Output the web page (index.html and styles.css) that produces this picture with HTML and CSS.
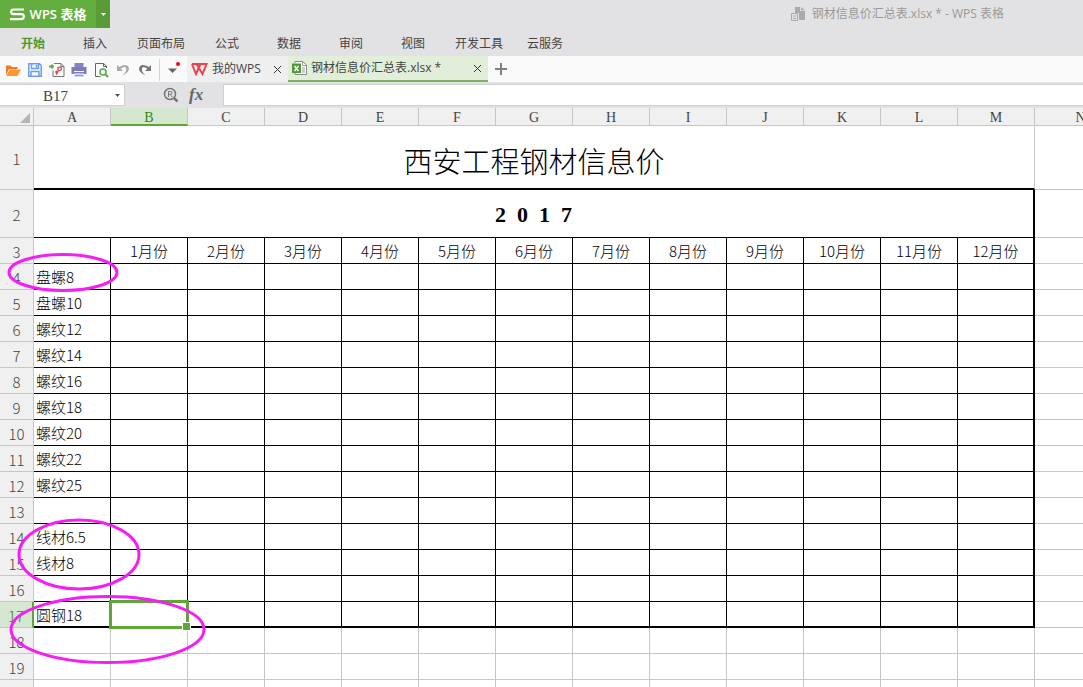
FILE: index.html
```html
<!DOCTYPE html>
<html lang="zh-CN">
<head>
<meta charset="utf-8">
<title>钢材信息价汇总表.xlsx - WPS 表格</title>
<link rel="stylesheet" href="styles.css">
</head>
<body>
<header class="titlebar">
  <div class="brand">
    <button class="brand-main" type="button">
      <svg width="15" height="13" viewBox="0 0 15 13" fill="none" stroke="#fff" stroke-width="2.2"><path d="M14 1.500H3.500Q1.200 1.500 1.200 3.700T3.500 6.200H11.500Q13.800 6.200 13.800 8.600T11.500 11.200H0"/></svg>
      WPS 表格
    </button>
    <button class="brand-drop" type="button" aria-label="菜单"><svg width="5" height="3" viewBox="0 0 5 3"><path d="M0 0H5L2.5 3Z" fill="#fff"/></svg></button>
  </div>
  <div class="doc-title">
    <svg width="15" height="15" viewBox="0 0 15 15"><path d="M4 0H9V4H14V13H8V6H4Z M10 0L14 3.200H10Z" fill="#aaa"/><path d="M.5 6.500H6.500V13.500H.5ZM2 9H5M2 11.500H5" fill="none" stroke="#aaa"/></svg>
    <span>钢材信息价汇总表.xlsx * - WPS 表格</span>
  </div>
</header>

<nav class="menu">
  <button class="menu-item current" type="button">开始</button>
  <button class="menu-item" type="button">插入</button>
  <button class="menu-item" type="button">页面布局</button>
  <button class="menu-item" type="button">公式</button>
  <button class="menu-item" type="button">数据</button>
  <button class="menu-item" type="button">审阅</button>
  <button class="menu-item" type="button">视图</button>
  <button class="menu-item" type="button">开发工具</button>
  <button class="menu-item" type="button">云服务</button>
</nav>

<div class="tabbar">
  <div class="quick">
    <button type="button" aria-label="打开"><svg width="16" height="16" viewBox="0 0 16 16"><path d="M1 13V3.500H5.500L7 5H12.500V7H4Z" fill="#f47b1c"/><path d="M4.500 7.500H16L12.500 14H1.200Z" fill="#ff9433"/></svg></button>
    <button type="button" aria-label="保存"><svg width="16" height="16" viewBox="0 0 16 16" fill="none" stroke="#6c9de8" stroke-width="1.500"><path d="M1.750 1.750H12.500L14.250 3.500V14.250H1.750ZM4.500 2V6.500H11.500V2M4 14V9.500H12V14M9.500 3V5.500"/></svg></button>
    <button type="button" aria-label="输出为PDF"><svg width="16" height="16" viewBox="0 0 16 16" fill="none"><path d="M5 1.500H12L15 4.500V14.500H4V8.500M12 1.500V4.500H15" stroke="#777"/><path d="M7 12.500Q9.500 10.500 9 5.500Q12.500 4.500 12.500 7Q12.500 8.500 7 9.500V11" stroke="#d9424d" stroke-width="1.300"/><path d="M0 4.500H5M3 2.500V6.500" stroke="#63aa43" stroke-width="2"/></svg></button>
    <button type="button" aria-label="打印"><svg width="16" height="16" viewBox="0 0 16 16"><path d="M3.500 1H12.500V5H3.500Z" fill="#8583c3"/><path d="M.5 5H15.500V12H.5Z" fill="#7d7bbd"/><path d="M3 9.500H13M3 12H13V15H3Z" fill="#a09ed3" stroke="#fff"/></svg></button>
    <button type="button" aria-label="打印预览"><svg width="16" height="16" viewBox="0 0 16 16" fill="none"><path d="M13.500 6V4L10.500 1.500H2.500V14.500H7.500M10.500 1.500V4.500H13" stroke="#666"/><circle cx="10" cy="10" r="3" stroke="#58a54b" stroke-width="1.500"/><path d="M12 12L15 15" stroke="#58a54b" stroke-width="2"/></svg></button>
    <button type="button" aria-label="撤销"><svg width="16" height="16" viewBox="0 0 16 16"><path d="M2 3V9H8L5.700 6.700Q10 3.500 11 6.500Q12 9.500 7.500 13.500Q14.500 10 14 6Q12 .5 4.200 5Z" fill="#aaa"/></svg></button>
    <button type="button" aria-label="恢复"><svg width="16" height="16" viewBox="0 0 16 16"><path d="M14 3V9H8L10.300 6.700Q6 3.500 5 6.500Q4 9.500 8.500 13.500Q1.500 10 2 6Q4 .5 11.800 5Z" fill="#777"/></svg></button>
    <span class="divider"></span>
    <button type="button" aria-label="自定义"><svg width="16" height="16" viewBox="0 0 16 16"><path d="M2 6.500H11L6.500 11Z" fill="#666"/><circle cx="12" cy="2" r="2" fill="#f00"/></svg></button>
  </div>
  <div class="tab">
    <svg width="17" height="14" viewBox="0 0 17 14" fill="none" stroke="#e8434b" stroke-width="2"><path d="M1 2H15.500L11.500 12L5.500 2M1 2L5 12L9.500 2"/></svg>
    <span class="tab-name">我的WPS</span>
    <button class="close" type="button" aria-label="关闭"><svg width="9" height="9" viewBox="0 0 9 9"><path d="M1 1L8 8M8 1L1 8" stroke="#333"/></svg></button>
  </div>
  <div class="tab active">
    <svg width="15" height="15" viewBox="0 0 15 15" fill="none"><path d="M3 2V.5H10.500L14.500 4V13.500H3V12" fill="#fff" stroke="#888"/><path d="M10.500 1V4.500H14M10 7H13M10 9H13M10 11H13" stroke="#999"/><path d="M0 2.500H9V12H0Z" fill="#4e973b"/><path d="M2.500 5L6.500 10M6.500 5L2.500 10" stroke="#fff" stroke-width="1.500"/></svg>
    <span class="tab-name">钢材信息价汇总表.xlsx *</span>
    <button class="close" type="button" aria-label="关闭"><svg width="9" height="9" viewBox="0 0 9 9"><path d="M1 1L8 8M8 1L1 8" stroke="#333"/></svg></button>
  </div>
  <button class="add" type="button" aria-label="新建"><svg width="12" height="12" viewBox="0 0 12 12"><path d="M0 6H12M6 0V12" stroke="#808080" stroke-width="2"/></svg></button>
</div>

<div class="formula">
  <div class="namebox">
    <input type="text" value="B17" aria-label="名称框">
    <button type="button" aria-label="名称列表"><svg width="5" height="3" viewBox="0 0 5 3"><path d="M0 0H5L2.500 3Z" fill="#555"/></svg></button>
  </div>
  <div class="tools">
    <button type="button" aria-label="浏览公式结果"><svg width="16" height="16" viewBox="0 0 16 16" fill="none" stroke="#777"><circle cx="7" cy="7" r="5.500" stroke-width="1.500"/><path d="M11 11L14.500 14.500" stroke-width="2.500"/><path d="M5.500 10V4.500H7.500Q9 4.500 9 6T7.500 7.300H5.500M7.500 7.500L9 10"/></svg></button>
    <button class="fx" type="button" aria-label="插入函数">fx</button>
  </div>
  <input class="formula-input" type="text" aria-label="编辑栏">
</div>

<main class="sheet">
  <table class="grid">
    <colgroup><col class="c-head"><col span="13" class="c-cell"><col class="c-last"></colgroup>
    <thead>
      <tr><th class="corner"><svg width="10" height="10" viewBox="0 0 10 10"><path d="M10 0V10H0Z" fill="#b5b5b5"/></svg></th><th>A</th><th class="sel">B</th><th>C</th><th>D</th><th>E</th><th>F</th><th>G</th><th>H</th><th>I</th><th>J</th><th>K</th><th>L</th><th>M</th><th>N</th></tr>
    </thead>
    <tbody>
      <tr class="r-title"><th>1</th><td colspan="13" class="title">西安工程钢材信息价</td><td></td></tr>
      <tr class="r-year"><th>2</th><td colspan="13" class="year edge">2  0  1  7</td><td></td></tr>
      <tr class="b months"><th>3</th><td></td><td>1月份</td><td>2月份</td><td>3月份</td><td>4月份</td><td>5月份</td><td>6月份</td><td>7月份</td><td>8月份</td><td>9月份</td><td>10月份</td><td>11月份</td><td class="edge">12月份</td><td></td></tr>
      <tr class="b"><th>4</th><td>盘螺8</td><td></td><td></td><td></td><td></td><td></td><td></td><td></td><td></td><td></td><td></td><td></td><td class="edge"></td><td></td></tr>
      <tr class="b"><th>5</th><td>盘螺10</td><td></td><td></td><td></td><td></td><td></td><td></td><td></td><td></td><td></td><td></td><td></td><td class="edge"></td><td></td></tr>
      <tr class="b"><th>6</th><td>螺纹12</td><td></td><td></td><td></td><td></td><td></td><td></td><td></td><td></td><td></td><td></td><td></td><td class="edge"></td><td></td></tr>
      <tr class="b"><th>7</th><td>螺纹14</td><td></td><td></td><td></td><td></td><td></td><td></td><td></td><td></td><td></td><td></td><td></td><td class="edge"></td><td></td></tr>
      <tr class="b"><th>8</th><td>螺纹16</td><td></td><td></td><td></td><td></td><td></td><td></td><td></td><td></td><td></td><td></td><td></td><td class="edge"></td><td></td></tr>
      <tr class="b"><th>9</th><td>螺纹18</td><td></td><td></td><td></td><td></td><td></td><td></td><td></td><td></td><td></td><td></td><td></td><td class="edge"></td><td></td></tr>
      <tr class="b"><th>10</th><td>螺纹20</td><td></td><td></td><td></td><td></td><td></td><td></td><td></td><td></td><td></td><td></td><td></td><td class="edge"></td><td></td></tr>
      <tr class="b"><th>11</th><td>螺纹22</td><td></td><td></td><td></td><td></td><td></td><td></td><td></td><td></td><td></td><td></td><td></td><td class="edge"></td><td></td></tr>
      <tr class="b"><th>12</th><td>螺纹25</td><td></td><td></td><td></td><td></td><td></td><td></td><td></td><td></td><td></td><td></td><td></td><td class="edge"></td><td></td></tr>
      <tr class="b"><th>13</th><td></td><td></td><td></td><td></td><td></td><td></td><td></td><td></td><td></td><td></td><td></td><td></td><td class="edge"></td><td></td></tr>
      <tr class="b"><th>14</th><td>线材6.5</td><td></td><td></td><td></td><td></td><td></td><td></td><td></td><td></td><td></td><td></td><td></td><td class="edge"></td><td></td></tr>
      <tr class="b"><th>15</th><td>线材8</td><td></td><td></td><td></td><td></td><td></td><td></td><td></td><td></td><td></td><td></td><td></td><td class="edge"></td><td></td></tr>
      <tr class="b"><th>16</th><td></td><td></td><td></td><td></td><td></td><td></td><td></td><td></td><td></td><td></td><td></td><td></td><td class="edge"></td><td></td></tr>
      <tr class="b bottom"><th class="sel">17</th><td>圆钢18</td><td class="cursor"></td><td></td><td></td><td></td><td></td><td></td><td></td><td></td><td></td><td></td><td></td><td class="edge"></td><td></td></tr>
      <tr><th>18</th><td></td><td></td><td></td><td></td><td></td><td></td><td></td><td></td><td></td><td></td><td></td><td></td><td></td><td></td></tr>
      <tr><th>19</th><td></td><td></td><td></td><td></td><td></td><td></td><td></td><td></td><td></td><td></td><td></td><td></td><td></td><td></td></tr>
      <tr><th>20</th><td></td><td></td><td></td><td></td><td></td><td></td><td></td><td></td><td></td><td></td><td></td><td></td><td></td><td></td></tr>
    </tbody>
  </table>
  <svg class="marks" width="220" height="570" viewBox="0 0 220 570" fill="none" stroke="#f51ff5" stroke-width="3">
    <ellipse cx="63" cy="164.500" rx="54" ry="18"/>
    <ellipse cx="79" cy="446.500" rx="60" ry="34.500"/>
    <ellipse cx="107.500" cy="521.500" rx="96.500" ry="33"/>
  </svg>
</main>
</body>
</html>
```

FILE: styles.css
```css
* { box-sizing: border-box; }
html, body { height: 100%; }
body {
  margin: 0;
  display: flex;
  flex-direction: column;
  overflow: hidden;
  background: #e2e2e4;
  color: #444;
  font: 12px/16px "Open Sans", "Noto Sans CJK SC", sans-serif;
}
button, input { font: inherit; color: inherit; border: 0; margin: 0; padding: 0; background: none; }
button { display: flex; align-items: center; justify-content: center; }
svg { display: block; flex: none; }

.titlebar { display: flex; justify-content: space-between; height: 28px; flex: none; }
.brand { display: flex; color: #fff; }
.brand-main { width: 96px; gap: 5px; background: #64ad3f; font-size: 13px; font-weight: 600; white-space: nowrap; }
.brand-drop { width: 14px; background: #589b37; }
.doc-title { display: flex; align-items: center; gap: 6px; padding-right: 79px; color: #999; }

.menu { display: flex; height: 28px; flex: none; padding: 4px 0 0 2px; }
.menu-item { min-width: 62px; padding: 0 11px; }
.menu-item.current { color: #4b982b; font-weight: 700; }

.tabbar { display: flex; height: 26px; flex: none; background: #fafafa; }
.quick { display: flex; align-items: center; gap: 6px; width: 187px; padding: 1px 0 0 5px; }
.divider { width: 1px; height: 22px; background: #d5d5d5; }
.tab { display: flex; align-items: center; gap: 4px; width: 101px; padding: 0 6px 0 4px; background: #efefef; }
.tab-name { flex: 1; white-space: nowrap; }
.tab.active { width: 200px; background: #e2eed9; border-bottom: 2px solid #7bb563; }
.add { width: 26px; }

.formula { display: flex; height: 26px; flex: none; padding: 2px 0; }
.namebox { display: flex; width: 125px; background: #fff; border: 1px solid #cfcfd4; border-left: 0; }
.namebox input { flex: 1; min-width: 0; padding-top: 2px; text-align: center; font: 15px/18px "Liberation Serif", serif; }
.namebox button { width: 13px; }
.tools { display: flex; align-items: center; gap: 10px; width: 98px; padding-left: 38px; }
.fx { font: italic bold 17px/20px "Liberation Serif", serif; color: #666; }
.formula-input { flex: 1; min-width: 0; background: #fff; border: 1px solid #cfcfd4; border-right: 0; }

.sheet { position: relative; flex: 1; min-height: 0; overflow: hidden; background: #fff; }
.grid { table-layout: fixed; width: 1127px; border-collapse: separate; border-spacing: 0; }
.c-head { width: 34px; }
.c-cell { width: 77px; }
.c-last { width: 92px; }
.grid tr { height: 26px; }
.grid th, .grid td { padding: 0; border: solid #c6c6c6; border-width: 0 1px 1px 0; }
.grid th { background: #f0f0f0; color: #444; font: 300 15px/18px "Noto Sans CJK SC", sans-serif; }
.grid tbody th { padding-top: 2px; }
.grid thead tr { height: 18px; }
.grid thead th { padding-top: 3px; font: 14px/14px "Liberation Serif", serif; }
.grid .corner svg { margin-left: 20px; }
.grid thead .sel { background: #d5e7cf; color: #37861a; border-bottom: 2px solid #5fa638; line-height: 13px; }
.grid tbody .sel { background: #d5e7cf; color: #37861a; border-right: 2px solid #5fa638; }
.grid td {
  color: #000;
  font: 300 15px/20px "Noto Sans CJK SC", sans-serif;
  white-space: pre;
}
.grid .b td { padding: 1px 0 0 2px; border-color: #000; }
.grid .b td:last-child { border-color: #c6c6c6; }
.grid .months td { text-align: center; padding-left: 0; }
.grid .r-title { height: 64px; }
.grid .r-year { height: 48px; }
.grid .title { padding-top: 6px; border-bottom: 2px solid #000; text-align: center; font-size: 29px; line-height: 40px; }
.grid .year { padding-top: 2px; border-color: #000; text-align: center; font: bold 22px/24px "Liberation Serif", serif; }
.grid .edge { border-right: 2px solid #000; }
.grid .bottom td:not(:last-child) { border-bottom-width: 2px; }

.grid .cursor { position: relative; }
.cursor::before { content: ""; position: absolute; inset: -2px -2px -3px; border: 3px solid #5fa638; }
.cursor::after { content: ""; position: absolute; right: -4px; bottom: -5px; width: 7px; height: 7px; border: 1px solid #fff; background: #5fa638; }

.marks { position: absolute; left: 0; top: 0; pointer-events: none; }
```
